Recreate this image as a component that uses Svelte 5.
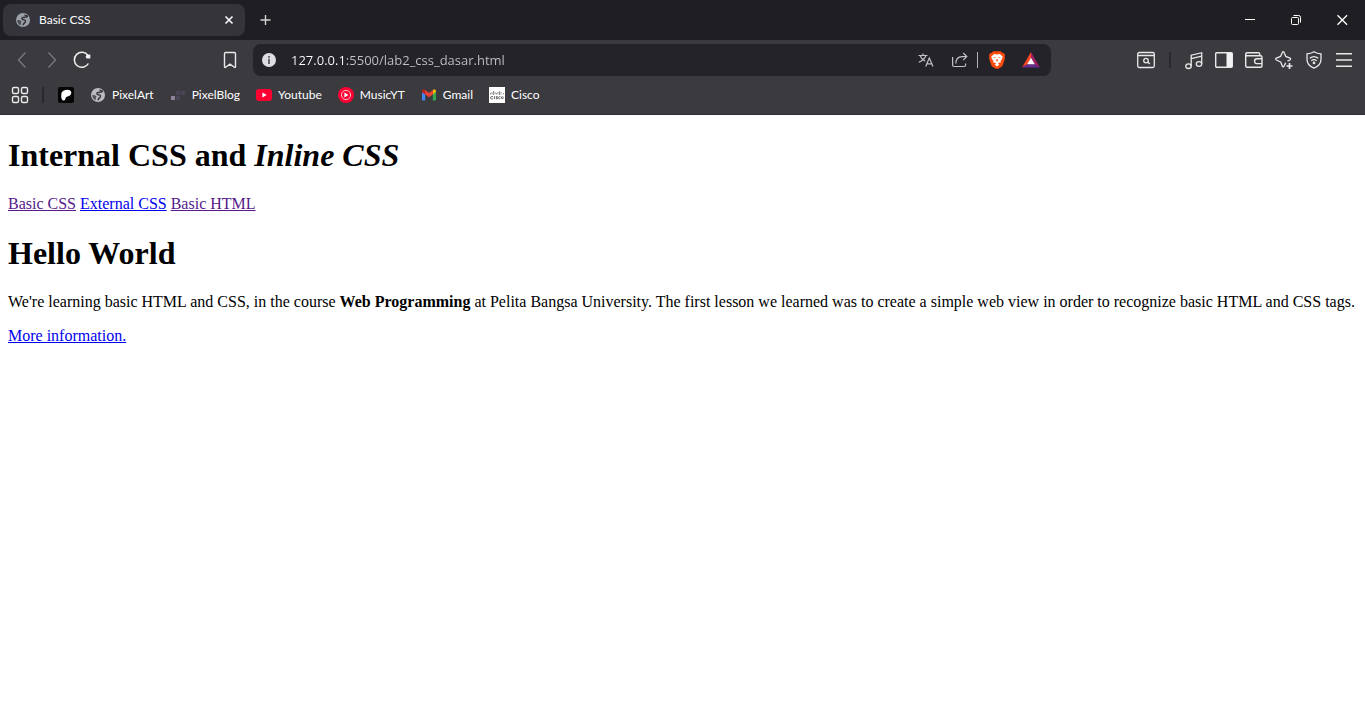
<script>
  const bookmarks = [
    { icon: 'patreon', label: '' },
    { icon: 'globe', label: 'PixelArt' },
    { icon: 'pixels', label: 'PixelBlog' },
    { icon: 'youtube', label: 'Youtube' },
    { icon: 'music', label: 'MusicYT' },
    { icon: 'gmail', label: 'Gmail' },
    { icon: 'cisco', label: 'Cisco' }
  ];
  let address = $state('127.0.0.1:5500/lab2_css_dasar.html');
</script>

{#snippet globe(fill, land)}
  <svg width="16" height="16" viewBox="0 0 16 16" aria-hidden="true">
    <circle cx="8" cy="8" r="7" fill={fill} />
    <path d="M9.600 2.600C10 4 11.500 3.600 12.400 4.200 11.200 5.800 8.900 4.600 7.300 5.700 6.400 6.500 6.900 7.600 8.400 7.700 10.200 7.700 10.900 8.700 10.300 9.900 9.700 11 8.600 11.200 8 13.200" fill="none" stroke={land} stroke-width="1.500" stroke-linejoin="round" />
    <path d="M2.300 7.900C4 8 5.800 8.200 6.400 9.400 6.700 10.300 5.600 10.600 5.800 11.900L5.700 13.300C3.600 12.400 2.200 10.400 2.300 7.900Z" fill={land} opacity=".8" />
  </svg>
{/snippet}

{#snippet siteIcon(name)}
  {#if name === 'globe'}
    {@render globe('#b9bbc0', '#3b3a3f')}
  {:else if name === 'patreon'}
    <svg width="16" height="16" viewBox="0 0 16 16" aria-hidden="true">
      <rect width="16" height="16" rx="2" fill="#050505" />
      <path d="M3.4 6.2C4 4 6.4 2.8 9.4 2.8c2.4 0 3.9 1.2 3.9 3 0 2-1.6 3.1-3.7 3.7-1.4.4-1.8.9-2.1 1.9-.3 1.1-.7 2-1.8 2-1.8 0-2.3-2-2.5-4Z" fill="#fff" />
    </svg>
  {:else if name === 'pixels'}
    <svg width="16" height="16" viewBox="0 0 16 16" shape-rendering="crispEdges" aria-hidden="true">
      <path d="M1 9h4v4H1z" fill="#8f859a" />
      <path d="M6 9h4v4H6zM6 4h4v4H6zM11 4h4v4h-4z" fill="#4b4357" />
    </svg>
  {:else if name === 'youtube'}
    <svg width="16" height="16" viewBox="0 0 16 16" aria-hidden="true">
      <rect y="2" width="16" height="12" rx="3" fill="#ff0033" />
      <path d="M6.4 5.6v4.8L10.6 8Z" fill="#fff" />
    </svg>
  {:else if name === 'music'}
    <svg width="16" height="16" viewBox="0 0 16 16" aria-hidden="true">
      <circle cx="8" cy="8" r="8" fill="#ff0033" />
      <circle cx="8" cy="8" r="4.6" fill="none" stroke="#ffb9c6" />
      <path d="M6.4 5.6v4.8L10.4 8Z" fill="#fff" />
    </svg>
  {:else if name === 'gmail'}
    <svg width="16" height="16" viewBox="0 0 16 16" aria-hidden="true">
      <path d="M1 5v7.6c0 .5.4.9.9.9h2.3V7.2Z" fill="#4285f4" />
      <path d="M15 5v7.6c0 .5-.4.9-.9.9h-2.3V7.2Z" fill="#34a853" />
      <path d="M1 4.2c0-1.6 1.7-2.2 2.8-1.4l.4.3v4.3L1 5Z" fill="#c5221f" />
      <path d="M15 4.2c0-1.6-1.7-2.2-2.8-1.4l-.4.3v4.3L15 5Z" fill="#fbbc04" />
      <path d="M4.2 7.4V3.1L8 6l3.8-2.9v4.3L8 10.3Z" fill="#ea4335" />
    </svg>
  {:else}
    <svg width="16" height="16" viewBox="0 0 16 16" aria-hidden="true">
      <rect width="16" height="16" fill="#fff" />
      <path d="M1.5 6v1.4M3 5v2.4M4.5 4v4M6 5v2.4M7.5 6v1.4M9 5v2.4M10.500 4v4M12 5v2.4M14.500 6v1.4" stroke="#777" stroke-width=".8" />
      <path d="M4 9.6H2.6a1 1 0 0 0 0 2.2H4M5.4 9.2v3M8.6 9.6H7.2v1.1h1.2v1.1H6.9M11.4 9.6h-.8a1 1 0 0 0 0 2.2h.8" fill="none" stroke="#444" stroke-width=".8" />
      <circle cx="13.3" cy="10.7" r="1" fill="none" stroke="#444" stroke-width=".8" />
    </svg>
  {/if}
{/snippet}

<div class="browser">
  <header>
    <div class="tabs">
      <div class="tab">
        {@render globe('#9aa0a6', '#34343a')}
        <span class="title">Basic CSS</span>
        <button class="close" aria-label="Close tab">
          <svg width="16" height="16" viewBox="0 0 16 16"><path d="m4.5 4.500 7 7m0-7-7 7" stroke="#f4f4f6" stroke-width="1.7" /></svg>
        </button>
      </div>
      <button class="new" aria-label="New tab">
        <svg width="16" height="16" viewBox="0 0 16 16"><path d="M8.500 3v10M3.500 8h10" stroke="#d5d5d8" stroke-width="1.400" /></svg>
      </button>
      <div class="window">
        <button aria-label="Minimize"><svg width="16" height="16" viewBox="0 0 16 16"><path d="M3 7.5h10" stroke="#fff" /></svg></button>
        <button aria-label="Restore"><svg width="16" height="16" viewBox="0 0 16 16" fill="none" stroke="#fff"><rect x="3.5" y="5.5" width="7" height="7" rx="1" /><path d="M5.500 3.500h5.200a1.800 1.800 0 0 1 1.800 1.800v5.200" /></svg></button>
        <button aria-label="Close"><svg width="16" height="16" viewBox="0 0 16 16"><path d="m3.500 3.200 9.600 9.600m0-9.600-9.600 9.600" stroke="#fff" stroke-width="1.300" /></svg></button>
      </div>
    </div>

    <div class="toolbar">
      <div class="side left">
        <button aria-label="Back"><svg width="20" height="20" viewBox="0 0 20 20" fill="none"><path d="m13.500 2.500-7 7.500 7 7.500" stroke="#77767b" stroke-width="1.400" /></svg></button>
        <button aria-label="Forward"><svg width="20" height="20" viewBox="0 0 20 20" fill="none"><path d="m6.500 2.500 7 7.500-7 7.500" stroke="#77767b" stroke-width="1.400" /></svg></button>
        <button aria-label="Reload"><svg width="20" height="20" viewBox="0 0 20 20" fill="none"><path d="M16.400 13.500A7.500 7.500 0 1 1 16 5.500" stroke="#f1f1f3" stroke-width="1.500" /><path d="M18.300 4.600v3.900h-3.300a2 2 0 0 1 0-3.700Z" fill="#f1f1f3" /></svg></button>
        <button class="save" aria-label="Bookmark this page"><svg width="20" height="20" viewBox="0 0 20 20" fill="none"><path d="M4.500 3.700c0-.8.500-1.200 1.200-1.200h8.600c.7 0 1.200.4 1.200 1.200v13.100c0 .6-.6.900-1.100.5L10 14.200l-4.400 3.100c-.5.400-1.100.1-1.100-.5Z" stroke="#e9e9ec" stroke-width="1.400" /></svg></button>
      </div>

      <div class="omnibox">
        <button aria-label="Site information"><svg width="14" height="14" viewBox="0 0 14 14"><circle cx="7" cy="7" r="7" fill="#dedde3" /><path d="M7 3v1.700M7 5.800V11" stroke="#4a494f" stroke-width="1.600" /></svg></button>
        <input type="text" aria-label="Address" spellcheck="false" bind:value={address} />
        <div class="actions">
          <button aria-label="Translate"><svg width="16" height="16" viewBox="0 0 16 16" fill="none" stroke="#c2c1c7" stroke-width="1.200"><path d="M.5 3.500h9M5 1.500v2M2.200 3.700c.8 2.500 3 4.500 5 5.500M7.800 3.700C7 6.500 4 9 .8 10.300M7.700 14.500l3.600-8.500 3.700 8.500M9 11.800h4.700" /></svg></button>
          <button aria-label="Share"><svg width="16" height="16" viewBox="0 0 16 16" fill="none" stroke="#c2c1c7" stroke-width="1.200"><path d="M.6 5v8c0 1 .6 1.500 1.500 1.500h10c.9 0 1.500-.5 1.500-1.500v-1.500M3.800 11.500c0-4.500 2.200-6.700 6.200-6.900h4.500M11.200 1l3.600 3.600-3.600 3.600" /></svg></button>
          <span class="rule"></span>
          <button aria-label="Brave Shields"><svg width="18" height="18" viewBox="0 0 18 18"><path d="m5.200.3 7.600 0 1.700 1.800 1.400-.1 1.200 2.400-.5 1.500.4 1.300-2.400 7.200c-.5 1-3.600 3-5.600 3.500-2-.5-5.100-2.500-5.600-3.500L1 7.200l.4-1.300-.5-1.500L2.100 2l1.400.1Z" fill="#fb4a0c" /><path d="M6.200 2.900 9 3.500l2.800-.6 2.900 2.600-.6 2.600-1.600 2 .4 1.300-2 .4-1 .9 1.500.8-2.400 2-2.400-2 1.500-.8-1-.9-2-.4.4-1.300-1.600-2-.6-2.600Z" fill="#fff" /><path d="m5 6 2.600.2-.5 1.100ZM13 6l-2.600.2.500 1.100ZM8.400 8h1.200l.2 2-.8.7-.8-.7Z" fill="#fb4a0c" /></svg></button>
          <button aria-label="Brave Rewards"><svg width="18" height="16" viewBox="0 0 18 16"><path d="M9 0 0 15.500 5.400 12.200 9 6Z" fill="#ff4724" /><path d="m9 0 9 15.500-5.400-3.300L9 6Z" fill="#9e1f63" /><path d="M0 15.500h18l-5.400-3.300H5.400Z" fill="#662d91" /><path d="m9 5.800 3.800 6.500H5.200Z" fill="#fff" /></svg></button>
        </div>
      </div>

      <div class="side right">
        <button aria-label="Search tabs"><svg width="20" height="20" viewBox="0 0 20 20" fill="none" stroke="#e9e9ec" stroke-width="1.300"><rect x="1.700" y="2.500" width="16.600" height="15" rx="1.500" /><path d="M2 5.500h16M12 12.300l1.800 1.700" /><circle cx="10" cy="10.600" r="2.300" /></svg></button>
        <span class="rule dark"></span>
        <button aria-label="Playlist"><svg width="20" height="20" viewBox="0 0 20 20" fill="none" stroke="#e9e9ec" stroke-width="1.300"><ellipse cx="4.500" cy="16.200" rx="2.700" ry="2.300" /><ellipse cx="15" cy="14" rx="2.700" ry="2.300" /><path d="M7.200 16.200V5.200l10.500-2.500V14M7.200 8.700l10.500-2.500" /></svg></button>
        <button aria-label="Sidebar"><svg width="20" height="20" viewBox="0 0 20 20"><rect x="1.700" y="2.700" width="16.600" height="14.600" rx="1" fill="none" stroke="#e9e9ec" stroke-width="1.400" /><path d="M12.500 3H18v14h-5.500Z" fill="#f1f1f3" /></svg></button>
        <button aria-label="Wallet"><svg width="20" height="20" viewBox="0 0 20 20" fill="none" stroke="#e9e9ec" stroke-width="1.400"><path d="M1.700 4.500v11.300c0 1 .5 1.500 1.500 1.500h13.300c1 0 1.500-.5 1.500-1.500V7.200c0-1-.5-1.500-1.500-1.500H3.200c-1 0-1.500-.5-1.500-1.400s.5-1.600 1.500-1.600h11.100c1 0 1.500.5 1.500 1.500v1.500" /><path d="M18 8.700h-5a2.400 2.400 0 0 0 0 4.900h5" /></svg></button>
        <button aria-label="Assistant"><svg width="20" height="20" viewBox="0 0 20 20" fill="none" stroke="#e9e9ec" stroke-width="1.300" stroke-linejoin="round"><path d="M11.700 12.800 10 16.200c-.4.700-1.300.7-1.600 0L6.700 12 2.300 10c-.8-.4-.8-1.400 0-1.800l4.400-1.900 1.700-4.100c.3-.8 1.300-.8 1.600 0l1.700 4.100 4.300 1.900c.8.400.8 1.400 0 1.800l-2.500 1.200" /><path d="M15.500 13v6M12.500 16h6" stroke-width="1.700" /></svg></button>
        <button aria-label="VPN"><svg width="20" height="20" viewBox="0 0 20 20" fill="none" stroke="#e9e9ec" stroke-width="1.300"><path d="M10 1.800c2.200 1.400 4.300 2 7 2.100v5.400c0 4.600-3.500 7.600-7 8.900-3.500-1.300-7-4.300-7-8.900V3.900c2.700-.1 4.800-.7 7-2.100Z" /><path d="M5.700 8.300c2.700-2.200 5.900-2.200 8.600 0M7.300 10.700c1.700-1.400 3.700-1.400 5.400 0" /><circle cx="10" cy="12.900" r=".7" fill="#e9e9ec" /></svg></button>
        <button aria-label="Menu"><svg width="20" height="20" viewBox="0 0 20 20"><path d="M2 3.700h16M2 10h16M2 16.300h16" stroke="#e9e9ec" stroke-width="1.500" /></svg></button>
      </div>
    </div>

    <nav class="bookmarks" aria-label="Bookmarks">
      <button aria-label="All bookmarks"><svg width="20" height="20" viewBox="0 0 20 20" fill="none" stroke="#e9e9ec" stroke-width="1.400"><rect x="2.500" y="2.500" width="6" height="6" rx="1.500" /><rect x="11.500" y="2.500" width="6" height="6" rx="1.500" /><rect x="2.500" y="11.500" width="6" height="6" rx="1.500" /><rect x="11.500" y="11.500" width="6" height="6" rx="1.500" /></svg></button>
      <span class="rule dark"></span>
      <ul>
        {#each bookmarks as mark}
          <li><a href="#top" aria-label={mark.label || 'Patreon'}>{@render siteIcon(mark.icon)}{#if mark.label}<span>{mark.label}</span>{/if}</a></li>
        {/each}
      </ul>
    </nav>
  </header>

  <main id="top">
    <h1>Internal CSS and <i>Inline CSS</i></h1>
    <nav>
      <a class="visited" href="#top">Basic CSS</a>
      <a href="#external">External CSS</a>
      <a class="visited" href="#html">Basic HTML</a>
    </nav>
    <h1>Hello World</h1>
    <p>We're learning basic HTML and CSS, in the course <b>Web Programming</b> at Pelita Bangsa University. The first lesson we learned was to create a simple web view in order to recognize basic HTML and CSS tags.</p>
    <a href="#more">More information.</a>
  </main>
</div>

<style>
  :global(body) {
    margin: 0;
    background: #fff;
  }

  header {
    background: #3b3a3f;
    color: #fff;
    font-family: Lato, "Open Sans", sans-serif;
    font-size: 12px;
    line-height: 16px;
  }

  header svg {
    display: block;
    flex: none;
  }

  button {
    display: flex;
    align-items: center;
    justify-content: center;
    margin: 0;
    padding: 0;
    border: 0;
    background: none;
  }

  .tabs {
    display: flex;
    align-items: center;
    height: 40px;
    padding-left: 3px;
    background: #1f1e23;
  }

  .tab {
    box-sizing: border-box;
    display: flex;
    align-items: center;
    gap: 8px;
    width: 242px;
    height: 32px;
    padding: 0 8px 0 12px;
    border-radius: 8px;
    background: #34343a;
  }

  .title {
    flex: 1;
  }

  .new {
    width: 40px;
    height: 32px;
  }

  .window {
    display: flex;
    height: 100%;
    margin-left: auto;
  }

  .window button {
    width: 46px;
  }

  .toolbar {
    display: flex;
    align-items: center;
    gap: 8px;
    height: 40px;
  }

  .side {
    box-sizing: border-box;
    display: flex;
    align-items: center;
  }

  .side button {
    width: 30px;
    height: 32px;
  }

  .left {
    width: 245px;
    padding-left: 7px;
  }

  .left .save {
    margin-left: auto;
  }

  .right {
    justify-content: flex-end;
    width: 306px;
    padding-right: 6px;
  }

  .right .rule {
    margin: 0 8px;
  }

  .rule {
    width: 1px;
    height: 16px;
    background: #b5b4ba;
  }

  .rule.dark {
    width: 2px;
    background: #29282d;
  }

  .omnibox {
    box-sizing: border-box;
    display: flex;
    flex: 1;
    align-items: center;
    min-width: 0;
    height: 32px;
    padding: 0 3px 0 9px;
    border-radius: 8px;
    background: #242329;
  }

  input {
    flex: 1;
    min-width: 0;
    height: 24px;
    margin-left: 15px;
    padding: 0;
    border: 0;
    outline: 0;
    background: linear-gradient(90deg, #fff 53px, #c3c2c8 53px);
    background-clip: text;
    color: transparent;
    font-family: "Open Sans", "Noto Sans", sans-serif;
    font-size: 13px;
  }

  .actions {
    display: flex;
    align-items: center;
  }

  .actions button {
    width: 34px;
    height: 32px;
  }

  .actions .rule {
    margin-right: 2px;
  }

  .bookmarks {
    box-sizing: border-box;
    display: flex;
    align-items: center;
    height: 35px;
    padding: 0 10px 4px;
    border-bottom: 1px solid #302f34;
  }

  .bookmarks .rule {
    margin: 0 14px 0 12px;
  }

  ul {
    display: flex;
    gap: 16px;
    margin: 0;
    padding: 0;
    list-style: none;
  }

  li a {
    display: flex;
    align-items: center;
    gap: 6px;
    color: #fff;
    text-decoration: none;
  }

  main {
    display: flow-root;
    padding: 0 8px;
    color: #000;
    font-family: "Liberation Serif", "Times New Roman", serif;
    font-size: 16px;
  }

  h1 {
    margin: 21px 0;
    font-size: 32px;
    line-height: 38px;
  }

  p {
    margin: 16px 0;
  }

  main a {
    color: #0000ee;
  }

  main a.visited {
    color: #551a8b;
  }
</style>
